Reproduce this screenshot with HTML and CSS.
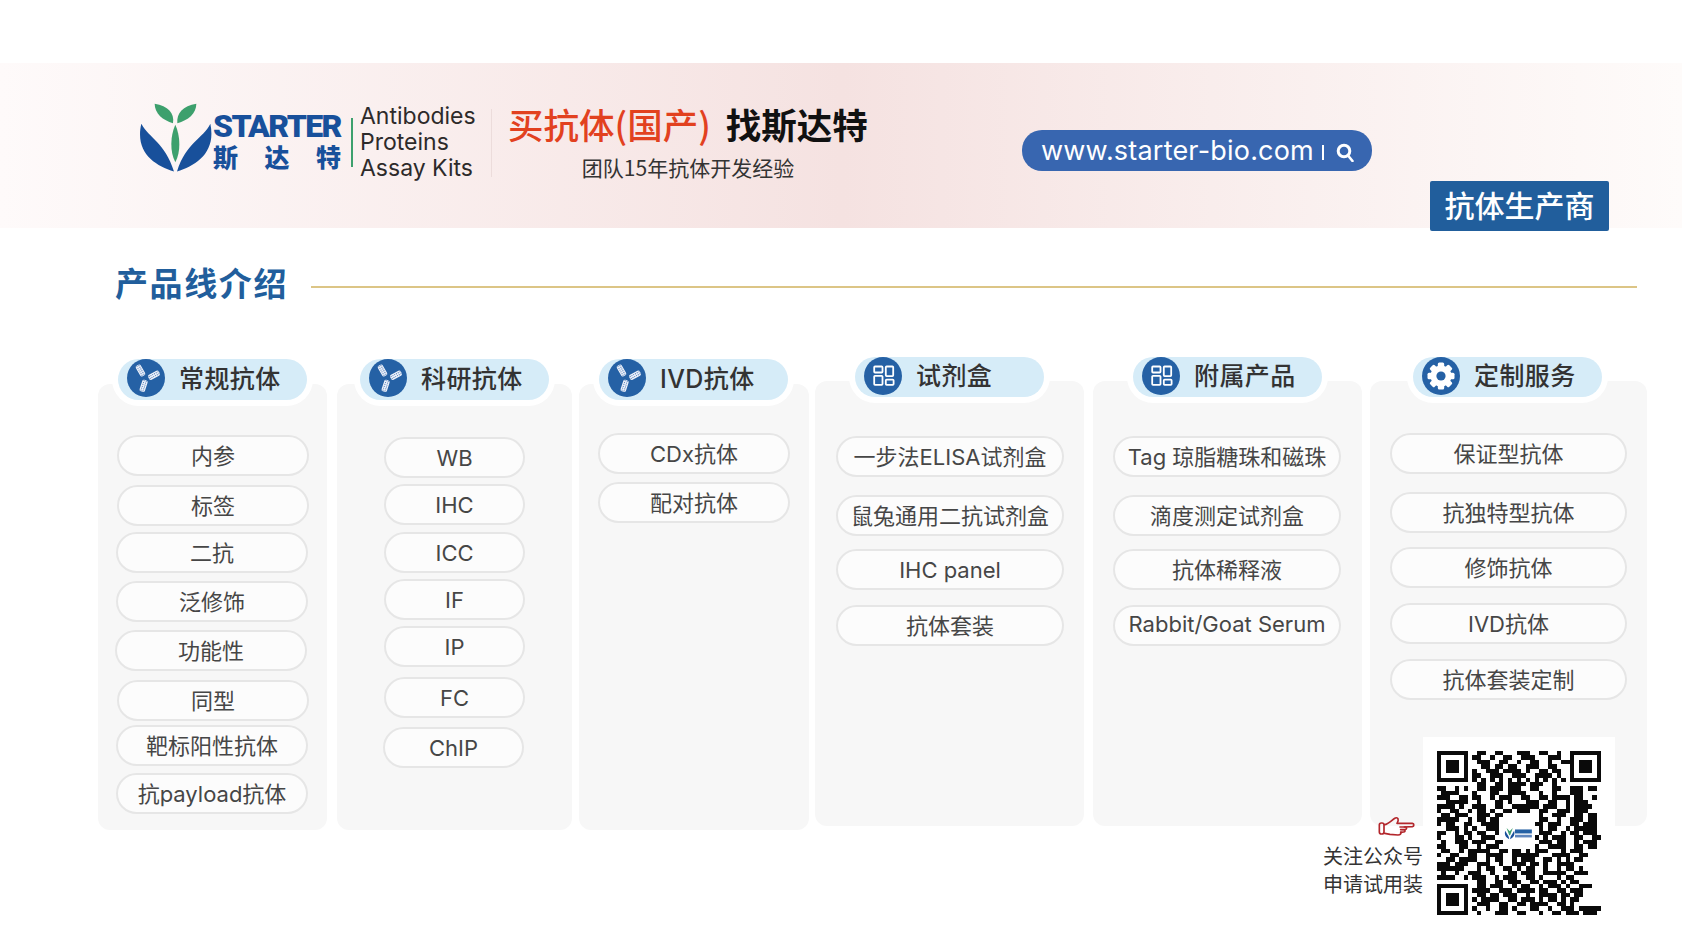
FILE: index.html
```html
<!DOCTYPE html>
<html lang="zh-CN">
<head>
<meta charset="utf-8">
<title>斯达特 产品线介绍</title>
<link rel="stylesheet" href="styles.css">
</head>
<body>
<svg class="sprite" aria-hidden="true">
  <symbol id="ico-ab" viewBox="0 0 38 38">
    <circle cx="19" cy="19" r="19" fill="#2561a5"/>
    <g transform="translate(13.5 11.5) rotate(-30)"><rect x="-2.8" y="-6" width="5.6" height="12" rx="1.8" fill="#eef2fa"/><path d="M-1.1-5.6v11.2M1.1-5.6v11.2" stroke="#4f7cb8" stroke-width="1" stroke-dasharray="1 1"/></g>
    <g transform="translate(27 16.2) rotate(62)"><rect x="-2.8" y="-6" width="5.6" height="12" rx="1.8" fill="#eef2fa"/><path d="M-1.1-5.6v11.2M1.1-5.6v11.2" stroke="#4f7cb8" stroke-width="1" stroke-dasharray="1 1"/></g>
    <g transform="translate(16.6 26.8) rotate(18)"><rect x="-2.8" y="-6" width="5.6" height="12" rx="1.8" fill="#eef2fa"/><path d="M-1.1-5.6v11.2M1.1-5.6v11.2" stroke="#4f7cb8" stroke-width="1" stroke-dasharray="1 1"/></g>
  </symbol>
  <symbol id="ico-grid" viewBox="0 0 38 38">
    <circle cx="19" cy="19" r="19" fill="#2561a5"/>
    <g fill="none" stroke="#fff" stroke-width="1.8">
      <rect x="10.2" y="9.5" width="8.3" height="6" rx=".8"/>
      <rect x="21.8" y="9.5" width="7.4" height="9.6" rx=".8"/>
      <rect x="10.2" y="18.8" width="8.3" height="9" rx=".8"/>
      <rect x="21.8" y="22.6" width="7.8" height="5.2" rx=".8"/>
    </g>
  </symbol>
  <symbol id="ico-gear" viewBox="0 0 38 38">
    <circle cx="19" cy="19" r="19" fill="#2561a5"/>
    <g fill="#fff">
      <circle cx="19" cy="19" r="10.5"/>
      <rect x="15.8" y="5.5" width="6.4" height="27" rx="1.5"/>
      <rect x="15.8" y="5.5" width="6.4" height="27" rx="1.5" transform="rotate(45 19 19)"/>
      <rect x="15.8" y="5.5" width="6.4" height="27" rx="1.5" transform="rotate(90 19 19)"/>
      <rect x="15.8" y="5.5" width="6.4" height="27" rx="1.5" transform="rotate(135 19 19)"/>
    </g>
    <circle cx="19" cy="19" r="4.6" fill="#2561a5"/>
  </symbol>
</svg>

<div class="page">
  <header class="band">
    <svg class="logo-mark" viewBox="25 20 225 215" aria-hidden="true">
      <path fill="#3da06d" d="M75 25C115 30 135 55 130 83C100 75 75 55 75 25Z"/>
      <path fill="#3da06d" d="M200 25C160 30 140 55 143 83C175 75 200 55 200 25Z"/>
      <path fill="#3da06d" d="M137 88C122 120 120 170 137 200C154 170 152 120 137 88Z"/>
      <path fill="#18509b" d="M35 85C60 130 105 140 133 228C75 210 15 170 35 85Z"/>
      <path fill="#18509b" d="M242 85C220 130 170 140 142 228C200 210 260 170 242 85Z"/>
    </svg>
    <div class="brand">
      <div class="brand-en">STARTER</div>
      <div class="brand-cn"><span>斯</span><span>达</span><span>特</span></div>
    </div>
    <div class="brand-rule"></div>
    <div class="brand-lines">
      <div>Antibodies</div>
      <div>Proteins</div>
      <div>Assay Kits</div>
    </div>
    <div class="band-rule"></div>
    <div class="slogan">
      <div class="slogan-main"><span class="slogan-red">买抗体(国产)</span><span class="slogan-black">找斯达特</span></div>
      <div class="slogan-sub">团队15年抗体开发经验</div>
    </div>
    <div class="url">
      <span class="url-text">www.starter-bio.com</span>
      <span class="url-bar"></span>
      <svg class="url-search" viewBox="0 0 18 19" aria-hidden="true"><circle cx="8" cy="8" r="5.8" fill="none" stroke="#fff" stroke-width="3"/><path d="M12 12.5L16.5 18" stroke="#fff" stroke-width="2.6" stroke-linecap="round"/></svg>
    </div>
    <div class="maker-tag">抗体生产商</div>
  </header>

  <section class="section-head">
    <h1 class="section-title">产品线介绍</h1>
    <div class="section-line"></div>
  </section>

  <main class="columns">
    <section class="col c1 low">
      <div class="col-head"><svg class="col-ico"><use href="#ico-ab"/></svg><span class="col-name">常规抗体</span></div>
      <ul class="pills">
        <li class="pill">内参</li><li class="pill">标签</li><li class="pill">二抗</li><li class="pill">泛修饰</li><li class="pill">功能性</li><li class="pill">同型</li><li class="pill">靶标阳性抗体</li><li class="pill">抗payload抗体</li>
      </ul>
    </section>
    <section class="col c2 low">
      <div class="col-head"><svg class="col-ico"><use href="#ico-ab"/></svg><span class="col-name">科研抗体</span></div>
      <ul class="pills">
        <li class="pill">WB</li><li class="pill">IHC</li><li class="pill">ICC</li><li class="pill">IF</li><li class="pill">IP</li><li class="pill">FC</li><li class="pill">ChIP</li>
      </ul>
    </section>
    <section class="col c3 low">
      <div class="col-head"><svg class="col-ico"><use href="#ico-ab"/></svg><span class="col-name">IVD抗体</span></div>
      <ul class="pills">
        <li class="pill">CDx抗体</li><li class="pill">配对抗体</li>
      </ul>
    </section>
    <section class="col c4">
      <div class="col-head"><svg class="col-ico"><use href="#ico-grid"/></svg><span class="col-name">试剂盒</span></div>
      <ul class="pills">
        <li class="pill">一步法ELISA试剂盒</li><li class="pill">鼠兔通用二抗试剂盒</li><li class="pill">IHC panel</li><li class="pill">抗体套装</li>
      </ul>
    </section>
    <section class="col c5">
      <div class="col-head"><svg class="col-ico"><use href="#ico-grid"/></svg><span class="col-name">附属产品</span></div>
      <ul class="pills">
        <li class="pill">Tag 琼脂糖珠和磁珠</li><li class="pill">滴度测定试剂盒</li><li class="pill">抗体稀释液</li><li class="pill">Rabbit/Goat Serum</li>
      </ul>
    </section>
    <section class="col c6">
      <div class="col-head"><svg class="col-ico"><use href="#ico-gear"/></svg><span class="col-name">定制服务</span></div>
      <ul class="pills">
        <li class="pill">保证型抗体</li><li class="pill">抗独特型抗体</li><li class="pill">修饰抗体</li><li class="pill">IVD抗体</li><li class="pill">抗体套装定制</li>
      </ul>
    </section>
  </main>

  <aside class="follow">
    <svg class="follow-hand" viewBox="0 0 162 96" aria-hidden="true">
      <g fill="none" stroke="#b3272c" stroke-width="5" stroke-linecap="round" stroke-linejoin="round">
        <rect x="28" y="36" width="14" height="33" rx="6"/>
        <path d="M44 41C56 39 66 26 76 21C84 18 88 26 81 37L127 37C133 38 133 46 127 47L103 48"/>
        <path d="M44 67L60 70L84 72C91 72 94 68 93 63"/>
        <path d="M90 48L108 48C111 51 110 54 106 55L92 56M92 56L104 57C106 60 105 63 101 63L92 64"/>
      </g>
    </svg>
    <div class="follow-text">关注公众号<br>申请试用装</div>
  </aside>

  <aside class="qr-box">
    <svg class="qr" viewBox="0 0 37 37" shape-rendering="crispEdges" aria-label="二维码">
      <path fill="#0a0a0a" fill-rule="evenodd" d="M0 0h7v7h-7zM1 1v5h5v-5zM2 2h3v3h-3zM30 0h7v7h-7zM31 1v5h5v-5zM32 2h3v3h-3zM0 30h7v7h-7zM1 31v5h5v-5zM2 32h3v3h-3z"/>
      <path fill="none" stroke="#0a0a0a" stroke-width="1" d="M9 .5h2m2 0h2m3 0h3m2 0h2m2 0h1M8 1.5h2m2 0h1m2 0h2m2 0h3m3 0h3M9 2.5h3m2 0h2m2 0h1m2 0h2m2 0h1m2 0h2M10 3.5h2m1 0h2m1 0h2m2 0h3m2 0h2M8 4.5h1m2 0h3m1 0h4m1 0h1m2 0h2m1 0h2M8 5.5h2m2 0h3m2 0h3m2 0h4m1 0h1M8 6.5h1m1 0h1m1 0h1m1 0h1m1 0h1m1 0h1m1 0h1m1 0h1m1 0h1m1 0h1m1 0h1M9 7.5h2m2 0h2m1 0h4m1 0h3m2 0h1M0 8.5h2m2 0h1m1 0h1m2 0h2m1 0h3m1 0h3m2 0h2m3 0h2m2 0h3m1 0h2M1 9.5h4m3 0h1m3 0h2m2 0h4m3 0h1m2 0h1m3 0h3M0 10.5h3m2 0h2m1 0h2m2 0h1m1 0h3m2 0h2m2 0h2m1 0h4m1 0h2m2 0h1M2 11.5h5m2 0h1m3 0h2m1 0h1m3 0h3m2 0h2m2 0h1m1 0h3M0 12.5h4m1 0h1m2 0h3m2 0h2m2 0h6m1 0h3m2 0h1m1 0h4M0 13.5h1m2 0h2m2 0h1m1 0h2m1 0h1m2 0h2m1 0h3m2 0h2m2 0h3m1 0h3M1 14.5h2m1 0h3m2 0h3m1 0h2M23 14.5h1m2 0h3m2 0h2m1 0h2M0 15.5h5m2 0h1m1 0h2m1 0h2M23 15.5h2m2 0h1m2 0h3m1 0h2M0 16.5h1m1 0h2m2 0h2m2 0h4M22 16.5h2m1 0h3m2 0h2m1 0h3M2 17.5h3m1 0h1m1 0h1m2 0h3M23 17.5h1m1 0h2m2 0h1m1 0h5M0 18.5h2m2 0h1m1 0h2m1 0h2m2 0h1M23 18.5h3m2 0h1m1 0h2m1 0h3M0 19.5h1m3 0h2m1 0h1m2 0h3M22 19.5h1m1 0h1m1 0h3m2 0h2m2 0h2M1 20.5h1m2 0h3m1 0h3m2 0h2M23 20.5h3m1 0h2m2 0h1m1 0h3M0 21.5h2m3 0h2m2 0h1m1 0h3M22 21.5h1m2 0h4m2 0h2m1 0h2M1 22.5h2m2 0h1m1 0h5m2 0h2m1 0h2m1 0h1m1 0h3m3 0h1m1 0h3M0 23.5h1m2 0h2m2 0h2m2 0h4m2 0h6m3 0h4m2 0h2M2 24.5h2m1 0h4m2 0h1m1 0h2m2 0h1m1 0h3m2 0h2m1 0h1m1 0h1m1 0h2M0 25.5h3m1 0h3m2 0h3m2 0h1m2 0h3m1 0h2m1 0h1m2 0h4M0 26.5h6m3 0h1m1 0h2m2 0h2m1 0h1m1 0h2m2 0h1m2 0h1m1 0h2m1 0h1M1 27.5h1m2 0h1m2 0h3m2 0h1m3 0h2m1 0h3m2 0h5m2 0h3M0 28.5h4m2 0h1m1 0h3m2 0h1m1 0h3m2 0h2m1 0h1m3 0h1m1 0h2M9 29.5h2m2 0h2m1 0h3m2 0h2m1 0h3m1 0h1m1 0h2M9 30.5h2m1 0h3m2 0h1m1 0h2m2 0h1m1 0h3m1 0h1m2 0h3M8 31.5h4m2 0h3m1 0h4m1 0h2m2 0h2m1 0h3M9 32.5h2m1 0h2m1 0h3m2 0h1m2 0h4m1 0h2m1 0h2M8 33.5h1m1 0h4m2 0h2m1 0h3m1 0h1m1 0h2m1 0h1m1 0h2M9 34.5h3m2 0h2m2 0h2m1 0h4m2 0h2m1 0h1M8 35.5h1m2 0h1m2 0h2m1 0h1m3 0h2m2 0h1m2 0h3M9 36.5h1m3 0h3m2 0h2m3 0h1m2 0h2m1 0h3M32 35.5h5M33 36.5h3"/>
      <g shape-rendering="auto">
        <path fill="#3da06d" d="M15.7 17.4l.7.7.7-.7-.6 1.6h-.2z"/>
        <path fill="#18509b" d="M15.4 18c.3.7.8 1 .9 1.9-.7-.3-1.2-1-.9-1.9zM17.4 18c-.3.7-.8 1-.9 1.9.7-.3 1.2-1 .9-1.9z"/>
        <rect x="17.6" y="17.7" width="3.8" height=".9" fill="#2561a5"/>
        <rect x="17.6" y="18.9" width="3.8" height=".6" fill="#5f86bd"/>
      </g>
    </svg>
  </aside>
</div>
</body>
</html>
```
FILE: styles.css
```css
* { box-sizing: border-box; }
html, body { margin: 0; padding: 0; background: #fff; }
body { font-family: "Inter", "Noto Sans CJK SC", sans-serif; color: #444; }
.sprite { position: absolute; width: 0; height: 0; overflow: hidden; }
.page { position: relative; width: 1682px; height: 930px; overflow: hidden; padding-top: 63px; }

/* header band */
.band {
  position: relative;
  display: flex;
  align-items: flex-start;
  height: 165px;
  padding-left: 138px;
  background: linear-gradient(90deg, #fefafa 0%, #f5e2e1 50%, #fefbfa 100%);
}
.logo-mark { width: 75px; height: 72px; margin-top: 39px; flex: none; }
.brand { width: 128px; margin-top: 48px; color: #18509b; flex: none; font-weight: 700; }
.brand-en { font-family: "Roboto", sans-serif; font-size: 32px; line-height: 30px; letter-spacing: -1.65px; white-space: nowrap; font-weight: 900; }
.brand-cn { display: flex; justify-content: space-between; font-family: "Noto Sans CJK SC", sans-serif; font-size: 25px; line-height: 30px; font-weight: 900; }
.brand-rule { width: 2px; height: 49px; margin-left: 10px; margin-top: 55px; background: #3da06d; flex: none; }
.brand-lines { margin-left: 7px; margin-top: 40px; width: 132px; font-size: 23px; line-height: 26px; color: #2d2a2a; flex: none; }
.band-rule { width: 1px; height: 68px; margin-left: -1px; margin-top: 46px; background: #ecdcdb; flex: none; }
.slogan { margin-left: 16px; margin-top: 38px; width: 514px; flex: none; font-family: "Noto Sans CJK SC", sans-serif; }
.slogan-main { display: flex; gap: 15px; font-size: 35.5px; line-height: 46px; font-weight: 500; white-space: nowrap; }
.slogan-red { color: #e2411f; }
.slogan-black { color: #111; font-weight: 700; }
.slogan-sub { width: 360px; text-align: center; font-size: 21px; line-height: 30px; margin-top: 5px; color: #333; }
.url {
  display: flex;
  align-items: center;
  width: 350px;
  height: 41px;
  margin-top: 67px;
  padding-left: 19px;
  border-radius: 20px;
  background: #3866b0;
  color: #fff;
  flex: none;
}
.url-text { width: 271px; font-size: 27px; font-weight: 400; white-space: nowrap; letter-spacing: .2px; }
.url-bar { width: 1.5px; height: 15px; margin-left: 10px; margin-top: 4px; background: #fff; }
.url-search { width: 18px; height: 19px; margin-left: 12px; margin-top: 4px; }
.maker-tag {
  position: absolute;
  left: 1430px;
  top: 118px;
  width: 179px;
  height: 50px;
  border-radius: 2px;
  background: #215e9c;
  color: #fff;
  text-align: center;
  font-family: "Noto Sans CJK SC", sans-serif;
  font-size: 30px;
  line-height: 47px;
  font-weight: 500;
}

/* section heading */
.section-head { display: flex; align-items: flex-start; height: 44px; margin-top: 34px; padding-left: 115px; padding-right: 45px; }
.section-title { margin: 0; font-family: "Noto Sans CJK SC", sans-serif; font-size: 33px; line-height: 40px; font-weight: 700; letter-spacing: 1.6px; color: #215e9c; white-space: nowrap; }
.section-line { flex: 1; height: 2px; margin-top: 24px; margin-left: 23px; background: #dcc586; }

/* product columns */
.columns { display: flex; align-items: flex-start; margin-top: 75px; padding-left: 98px; }
.col { height: 445px; border-radius: 12px; background: #f7f7f7; flex: none; }
.col.low { margin-top: 3px; height: 446px; }
.c1 { width: 229px; }
.c2 { width: 235px; margin-left: 10px; }
.c3 { width: 230px; margin-left: 7px; }
.c4 { width: 269px; margin-left: 6px; }
.c5 { width: 269px; margin-left: 9px; }
.c6 { width: 277px; margin-left: 8px; }

.col-head {
  display: flex;
  align-items: flex-start;
  width: 189px;
  height: 40px;
  margin-top: -24px;
  padding-left: 9px;
  border-radius: 21px;
  background: #d6ecf8;
  box-shadow: 0 0 0 6px #fff;
}
.low .col-head { margin-top: -25px; height: 41px; }
.c1 .col-head { margin-left: 20px; }
.c2 .col-head { margin-left: 23px; }
.c3 .col-head { margin-left: 20px; }
.c4 .col-head, .c5 .col-head { margin-left: 40px; }
.c6 .col-head { margin-left: 43px; }
.col-ico { width: 38px; height: 38px; flex: none; }
.col-name { margin-left: 14px; font-family: "Inter", "Noto Sans CJK SC", sans-serif; font-size: 25px; line-height: 38px; font-weight: 500; letter-spacing: .4px; color: #333; white-space: nowrap; }
.low .col-name { line-height: 40px; }

.pills { display: flex; flex-direction: column; align-items: flex-start; margin: 0; padding: 0; list-style: none; }
.pill {
  display: flex;
  align-items: center;
  justify-content: center;
  height: 41px;
  padding-bottom: 4px;
  border: 2px solid #e6e6e6;
  border-radius: 21px;
  background: #fcfcfc;
  font-size: 22px;
  color: #464646;
  white-space: nowrap;
  flex: none;
}
.c1 .pills { padding-top: 35px; padding-left: 19px; }
.c1 .pill { width: 192px; margin-top: 8px; }
.c1 .pill:nth-child(1) { margin-top: 0; }
.c1 .pill:nth-child(2) { margin-top: 9px; }
.c1 .pill:nth-child(3) { margin-top: 6px; margin-left: -1px; }
.c1 .pill:nth-child(4) { margin-left: -1px; }
.c1 .pill:nth-child(5) { margin-top: 8px; margin-left: -2px; }
.c1 .pill:nth-child(6) { margin-top: 9px; }
.c1 .pill:nth-child(7) { margin-top: 4px; margin-left: -1px; }
.c1 .pill:nth-child(8) { margin-top: 7px; margin-left: -1px; }

.c2 .pills { padding-top: 37px; padding-left: 47px; }
.c2 .pill { width: 141px; margin-top: 6px; padding-bottom: 0; }
.c2 .pill:nth-child(1) { margin-top: 0; }
.c2 .pill:nth-child(3) { margin-top: 7px; }
.c2 .pill:nth-child(6) { margin-top: 10px; }
.c2 .pill:nth-child(7) { margin-top: 9px; margin-left: -1px; }

.c3 .pills { padding-top: 33px; padding-left: 19px; }
.c3 .pill { width: 192px; }
.c3 .pill:nth-child(2) { margin-top: 8px; }

.c4 .pills, .c5 .pills { padding-top: 39px; padding-left: 21px; }
.c5 .pills { padding-left: 20px; }
.c4 .pill, .c5 .pill { width: 228px; }
.c4 .pill:nth-child(2), .c5 .pill:nth-child(2) { margin-top: 18px; }
.c4 .pill:nth-child(3), .c5 .pill:nth-child(3) { margin-top: 13px; }
.c4 .pill:nth-child(3) { padding-bottom: 0; }
.c4 .pill:nth-child(4), .c5 .pill:nth-child(4) { margin-top: 15px; }

.c6 .pills { padding-top: 36px; padding-left: 20px; }
.c6 .pill { width: 237px; margin-top: 15px; }
.c6 .pill:nth-child(1) { margin-top: 0; }
.c6 .pill:nth-child(2) { margin-top: 18px; }
.c6 .pill:nth-child(3) { margin-top: 14px; }

/* follow us + QR overlay */
.follow { position: absolute; left: 1323px; top: 817px; width: 100px; display: flex; flex-direction: column; align-items: flex-end; }
.follow-hand { width: 54px; height: 32px; margin-right: -1px; margin-top: -6px; }
.follow-text { width: 100px; margin-top: -1px; font-family: "Noto Sans CJK SC", sans-serif; font-size: 20px; line-height: 28px; color: #333; white-space: nowrap; }
.qr-box { position: absolute; left: 1423px; top: 737px; width: 192px; height: 193px; padding: 14px; background: #fff; }
.qr { display: block; width: 164px; height: 164px; }
```
